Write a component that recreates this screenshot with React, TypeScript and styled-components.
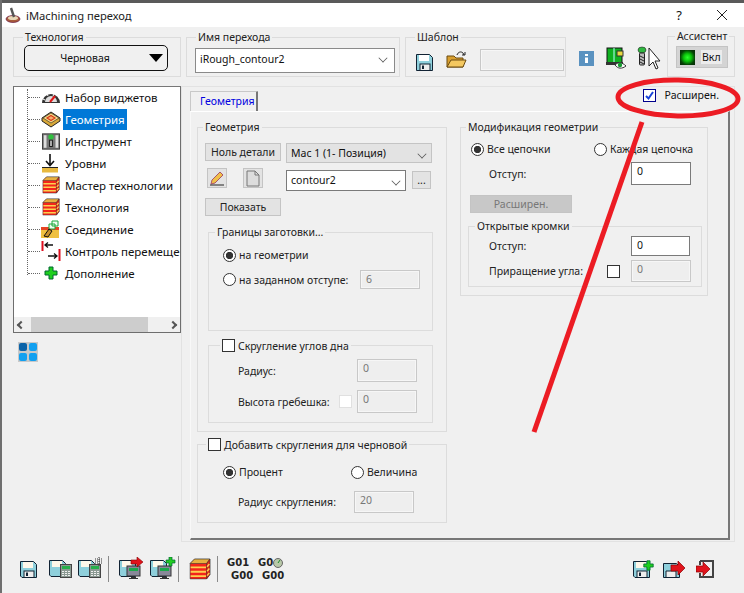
import React from 'react';
import styled, { createGlobalStyle } from 'styled-components';

const Global = createGlobalStyle`
  html, body { margin: 0; padding: 0; background: #f0f0f0; }
  body { width: 744px; height: 593px; overflow: hidden; font-family: "Noto Sans", "Liberation Sans", sans-serif; font-size: 10.5px; color: #111; }
  * { box-sizing: border-box; }
`;

const Win = styled.div`position: relative; width: 744px; height: 593px; overflow: hidden; background: #f0f0f0; border-left: 2px solid #6f6f6f;`;
const TopStrip = styled.div`height: 3px; background: #5a5a5a;`;
const TitleBar = styled.div`height: 24px; background: #fff; display: flex; align-items: center; padding-left: 3px; gap: 5px; font-size: 11.2px;`;
const TitleText = styled.span`flex: 1; color: #222;`;
const TitleBtn = styled.span`width: 40px; display: flex; justify-content: center; font-size: 13px; &:last-child{width: 45px; margin-left: -5px;}`;
const Top = styled.div`display: flex; padding: 4px 0 0 11px; height: 52px;`;
const Group = styled.fieldset<{ $w?: number; $h?: number; $ml?: number; $mt?: number }>`
  margin: ${p => p.$mt ?? 0}px 0 0 ${p => p.$ml ?? 0}px; padding: 0; border: 1px solid #dcdcdc; min-width: 0; flex: none;
  width: ${p => (p.$w ? p.$w + 'px' : 'auto')}; height: ${p => (p.$h ? p.$h + 'px' : 'auto')};
`;
const Legend = styled.legend<{ $ml?: number }>`margin-left: ${p => p.$ml ?? 9}px; padding: 0 2px; font-size: 10.5px; line-height: 12px; color: #222; display: flex; align-items: center; gap: 3px;`;
const TechBtn = styled.div`margin: 2px 0 0 10px; width: 144px; height: 26px; border: 1px solid #111; border-radius: 5px; display: flex; align-items: center; justify-content: center; position: relative; font-size: 10.5px; padding-right: 22px;
  &::after { content: ''; position: absolute; right: 4px; top: 8px; border: 7px solid transparent; border-top: 8px solid #000; border-bottom: 0; }`;
const NameField = styled.div`margin: 5px 0 0 8px; width: 200px; height: 25px; background: #fff; border: 1px solid #8a8a8a; display: flex; justify-content: space-between; padding: 3px 4px; font-size: 10.5px;`;
const Chevron = styled.span`width: 8px; height: 8px; border: solid #555; border-width: 0 1px 1px 0; transform: rotate(45deg) scale(.8); margin: 2px 3px 0 0;`;
const Row = styled.div<{ $gap?: number; $mt?: number; $ml?: number; $start?: boolean }>`display: flex; align-items: ${p => p.$start ? 'flex-start' : 'center'}; gap: ${p => p.$gap ?? 0}px; margin: ${p => p.$mt ?? 0}px 0 0 ${p => p.$ml ?? 0}px;`;
const ReadBox = styled.div<{ $w: number; $h?: number; $ml?: number }>`width: ${p => p.$w}px; height: ${p => p.$h ?? 23}px; margin-left: ${p => p.$ml ?? 0}px; border: 1px solid #c8c8c8; background: #eeeeee; color: #777; font-size: 10.5px; padding: 1px 5px; flex: none; box-shadow: inset 0 0 0 1px #f6f6f6;`;
const EditBox = styled.div<{ $w: number; $h: number; $ml?: number }>`width: ${p => p.$w}px; height: ${p => p.$h}px; margin-left: ${p => p.$ml ?? 0}px; flex: none; border: 1px solid #7a7a7a; background: #fff; font-size: 10.5px; padding: 1px 5px;`;
const LedBtn = styled.div`margin: 4px 0 0 8px; width: 52px; height: 22px; background: #d4d4d4; border: 1px solid #c4c4c4; display: flex; align-items: center; padding-left: 3px; gap: 6px; font-size: 10.5px;`;
const Led = styled.div`width: 15px; height: 15px; background: radial-gradient(circle, #2bff2b 0, #0bc40b 35%, #053f05 70%, #0a2a0a 100%);`;
const LedLabel = styled.span`background: #ececec; padding: 0 1px; line-height: 14px;`;

const Body = styled.div`display: flex; padding: 7px 0 0 11px;`;
const LeftCol = styled.div`width: 169px; flex: none;`;
const Tree = styled.div`height: 247px; width: 168px; border: 1px solid #6e6e6e; background: #fff; display: flex; flex-direction: column; border-top-color: #777; overflow: hidden;`;
const TreeList = styled.div`flex: 1; margin-top: -1px; padding: 0 0 0 14px; position: relative; overflow: hidden;`;
const TreeItem = styled.div`height: 22px; display: flex; align-items: center; white-space: nowrap; font-size: 11.5px; position: relative; padding-left: 13px; color: #111;
  &::before { content: ''; position: absolute; left: 0; width: 12px; top: 11px; border-top: 1px dotted #666; }`;
const VLine = styled.div`position: absolute; left: 13px; top: 3px; height: 186px; border-left: 1px dotted #666;`;
const TreeIcon = styled.span`width: 20px; height: 20px; flex: none; margin-right: 4px; display: inline-flex; align-items: center; justify-content: center;`;
const TreeLabel = styled.span<{ $sel?: boolean }>`padding: 0 2px 0 ${p => p.$sel ? 2 : 0}px; line-height: 21px; height: 21px; margin-left: ${p => p.$sel ? -2 : 0}px; background: ${p => p.$sel ? '#0078d7' : 'transparent'}; color: ${p => p.$sel ? '#fff' : '#111'};`;
const HScroll = styled.div`height: 15px; background: #f0f0f0; display: flex; align-items: center; justify-content: space-between; position: relative; padding: 0 4px; color: #555;`;
const Thumb = styled.div`position: absolute; left: 17px; width: 117px; top: 0; height: 15px; background: #cdcdcd;`;
const Arrow = styled.span<{ $r?: boolean }>`width: 6px; height: 6px; border: solid #555; border-width: 2px 0 0 2px; transform: rotate(${p => p.$r ? 135 : -45}deg);`;
const GridIcon = styled.div`margin: 9px 0 0 5px; width: 20px; height: 20px; display: grid; grid-template-columns: 1fr 1fr; gap: 2px; padding: 1px; background: #c9c9c9;`;
const GridCell = styled.div<{ $d?: boolean }>`background: ${p => p.$d ? '#0a63a8' : '#12a0f0'}; border-radius: 2px;`;

const Outer = styled.div`width: 554px; height: 456px; margin-left: -1px; border: 1px solid #e2e2e2; padding: 4px 4px 0 8px; flex: none;`;
const Tab = styled.div`width: 68px; height: 20px; background: #f0f0f0; border: 1px solid #c8c8c8; border-bottom: 0; border-right: 2px solid #777; color: #0000e0; font-size: 10.5px; padding: 2px 0 0 9px; border-radius: 1px 1px 0 0;`;
const Page = styled.div`position: relative; height: 429px; border: 1px solid #fff; border-left-color: #f8f8f8; border-right: 2px solid #777; border-bottom: 2px solid #777; padding: 9px 0 0 6px; display: flex;`;
const AdvCheck = styled.div`position: absolute; right: 9px; top: -24px; display: flex; align-items: center; gap: 9px; font-size: 10.5px;`;
const PageLeft = styled.div`width: 250px; flex: none;`;
const PageRight = styled.div`width: 248px; margin-left: 13px; flex: none;`;
const Check = styled.span<{ $on?: boolean; $light?: boolean }>`width: 13px; height: 13px; flex: none; display: inline-block; background: #fff; border: 1px solid ${p => p.$on ? '#00008c' : p.$light ? '#e0e0e0' : '#333'}; position: relative;`;
const Radio = styled.span<{ $on?: boolean }>`width: 13px; height: 13px; flex: none; border-radius: 50%; border: 1px solid #333; background: ${p => p.$on ? 'radial-gradient(circle, #333 0 3.4px, #fff 3.9px)' : '#fff'};`;
const FlatBtn = styled.div<{ $w: number; $h?: number; $off?: boolean; $ml?: number; $mt?: number }>`width: ${p => p.$w}px; height: ${p => p.$h ?? 18}px; margin: ${p => p.$mt ?? 0}px 0 0 ${p => p.$ml ?? 0}px; flex: none; background: ${p => p.$off ? '#c8c8c8' : '#e3e3e3'}; border: 1px solid #c4c4c4; color: ${p => p.$off ? '#777' : '#222'}; display: flex; align-items: center; justify-content: center; font-size: 10.5px;`;
const Combo = styled.div<{ $w: number; $h: number; $white?: boolean; $ml?: number; $mt?: number }>`width: ${p => p.$w}px; height: ${p => p.$h}px; margin: ${p => p.$mt ?? 0}px 0 0 ${p => p.$ml ?? 0}px; flex: none; background: ${p => p.$white ? '#fff' : '#e3e3e3'}; border: 1px solid ${p => p.$white ? '#7a7a7a' : '#c4c4c4'}; display: flex; align-items: center; justify-content: space-between; padding: 0 2px 1px 4px; font-size: 10.5px;`;
const Lbl = styled.span<{ $w?: number }>`${p => p.$w ? `width:${p.$w}px;flex:none;` : ''} white-space: nowrap; color: #222; font-size: 10.5px;`;

const Bottom = styled.div`margin-top: 12px; height: 30px; display: flex; align-items: center; padding-left: 18px;`;
const Sep = styled.div<{ $l: number; $r: number }>`width: 1px; height: 26px; background: #8a8a8a; margin: 0 ${p => p.$r}px 0 ${p => p.$l}px; flex: none;`;
const Gcode = styled.div<{ $w: number }>`width: ${p => p.$w}px; flex: none; font: bold 10px/13px "DejaVu Sans", sans-serif; color: #222;`;
const GLine = styled.div<{ $in?: boolean }>`padding-left: ${p => p.$in ? 4 : 0}px; display: flex; align-items: center; height: 13px; gap: 0;`;
const Spacer = styled.div`flex: 1;`;
const BIcon = styled.span<{ $mr?: number }>`display: inline-flex; margin-right: ${p => p.$mr ?? 0}px; flex: none;`;
const Overlay = styled.svg`position: absolute; left: -2px; top: 0; pointer-events: none;`;

const Floppy = ({ s = 17 }: { s?: number }) => (
  <svg width={s} height={s} viewBox="0 0 17 17"><path d="M.5.5h13l3 3v13H2L.5 15z" fill="#8fd0dc" stroke="#123" /><rect x="3" y="1" width="10" height="6" fill="#fff8ea" /><rect x="4" y="10" width="10" height="6.5" fill="#eee" stroke="#123" /><rect x="6" y="11.5" width="2" height="3.5" fill="#123" /></svg>
);
const Calc = () => (
  <svg x="11" y="7" width="12" height="14" viewBox="0 0 12 14"><rect x=".5" y=".5" width="11" height="13" fill="#8a9a92" stroke="#444" /><rect x="2" y="2" width="8" height="3" fill="#25b04a" /><path d="M2 7h2v1H2zm3 0h2v1H5zm3 0h2v1H8zM2 9h2v1H2zm3 0h2v1H5zm3 0h2v1H8zM2 11h2v1H2zm3 0h2v1H5zm3 0h2v1H8z" fill="#eee" /></svg>
);
const FloppyCalc = ({ dots }: { dots?: boolean }) => (
  <svg width="26" height="24" viewBox="0 0 26 24"><g transform="translate(0,3)"><path d="M.5.5h13l3 3v13H2L.5 15z" fill="#8fd0dc" stroke="#123" /><rect x="3" y="1" width="10" height="6" fill="#fff8ea" /></g><Calc />{dots && <path d="M17 2h7M17 4h7M17 6h7M21 0v10" stroke="#333" strokeDasharray="1 1" />}</svg>
);
const FloppyMon = ({ red }: { red?: boolean }) => (
  <svg width="26" height="24" viewBox="0 0 26 24"><g transform="translate(0,3)"><path d="M.5.5h13l3 3v13H2L.5 15z" fill="#8fd0dc" stroke="#123" /><rect x="3" y="1" width="10" height="6" fill="#fff8ea" /></g><rect x="8" y="9" width="13" height="10" fill="#889" stroke="#333" /><rect x="10" y="11" width="9" height="3" fill="#1aa84a" /><path d="M12 20h5v1h2v1h-9v-1h2z" fill="#333" />
    {red ? <path d="M12 3h6V0l6 5-6 5V7h-6z" fill="#e0141c" stroke="#800" strokeWidth=".6" /> : <path d="M16 3h3V0h3v3h3v3h-3v3h-3V6h-3z" fill="#22cc22" stroke="#063" strokeWidth=".7" />}</svg>
);
const Stack = ({ s = 20 }: { s?: number }) => (
  <svg width={s} height={s} viewBox="0 0 20 20"><path d="M1 5l4-4h14v14l-3 4H1z" fill="#f4241a" stroke="#333" strokeWidth=".5" /><path d="M1 5l4-4h14l-3 4z" fill="#e8b040" stroke="#333" strokeWidth=".5" /><path d="M1.500 8.500h14M1.500 12.500h14M1.500 16.500h14" stroke="#fbd050" strokeWidth="1.700" /><path d="M16 5l3-4v14l-3 4z" fill="#e0281a" stroke="#333" strokeWidth=".5" /><path d="M16.500 8l2-2.500M16.500 12l2-2.500M16.500 16l2-2.500" stroke="#fbd050" strokeWidth="1.300" /></svg>
);
const PlusG = ({ s = 14 }: { s?: number }) => (
  <svg width={s} height={s} viewBox="0 0 14 14"><path d="M5 1h4v4h4v4H9v4H5V9H1V5h4z" fill="#1fcf1f" stroke="#063" /></svg>
);
const Gauge = () => (
  <svg width="20" height="13" viewBox="0 0 20 13"><path d="M1 12a9 9 0 0 1 18 0z" fill="#333" /><path d="M4 11a6 6 0 0 1 12 0z" fill="#ddd" /><path d="M9 11l5-6" stroke="#e01818" strokeWidth="2" /><path d="M2 8l2 1M6 3l1 2M13 3l-1 2" stroke="#fff" /></svg>
);
const Geo = () => (
  <svg width="20" height="17" viewBox="0 0 20 17"><path d="M10 1l9 6v3l-9 6-9-6V7z" fill="#d8a838" stroke="#222" /><path d="M10 2l8 5-8 5-8-5z" fill="#f8dc88" stroke="#222" strokeWidth=".6" /><path d="M10 4.500l4 2.500-4 2.500-4-2.500z" fill="#f4b070" stroke="#d83a18" strokeWidth="1.200" /></svg>
);
const ToolIc = () => (
  <svg width="18" height="19" viewBox="0 0 20 20"><rect x=".5" y="1.500" width="19" height="17" fill="#777" stroke="#333" /><rect x="2" y="3" width="3" height="14" fill="#ddd" /><rect x="15" y="3" width="3" height="14" fill="#ddd" /><circle cx="10" cy="5" r="3" fill="#2fbf3f" /><rect x="8" y="8" width="4" height="8" fill="#111" /><rect x="9" y="9" width="2" height="6" fill="#bbb" /></svg>
);
const Levels = () => (
  <svg width="18" height="20" viewBox="0 0 18 20"><rect y="15" width="16" height="4.500" fill="#e8b93f" /><path d="M0 14.500h16" stroke="#222" /><path d="M8 1v11M4 8l4 4.500L12 8" fill="none" stroke="#111" strokeWidth="1.600" /></svg>
);
const Conn = () => (
  <svg width="20" height="20" viewBox="0 0 20 20"><rect y="8" width="18" height="11" fill="#efc040" /><path d="M0 8h18v3H0z" fill="#e64424" /><path d="M8 5h6v5H8zM11 2h6v5h-6z" fill="#f0fff0" stroke="#1ba83a" /><path d="M3 17l5-7 3 2-4 6z" fill="#c8902c" stroke="#111" /></svg>
);
const Move = () => (
  <svg width="20" height="20" viewBox="0 0 20 20"><path d="M1.500 0v10M18.500 8v12" stroke="#e01020" strokeWidth="2" /><path d="M12 4H4M7 1.500L4 4l3 2.500M7 15h9M13 12.500l3 2.500-3 2.500" fill="none" stroke="#111" strokeWidth="1.300" /></svg>
);

const items: [React.ReactNode, string, boolean?][] = [
  [<Gauge />, 'Набор виджетов'], [<Geo />, 'Геометрия', true], [<ToolIc />, 'Инструмент'], [<Levels />, 'Уровни'],
  [<Stack s={18} />, 'Мастер технологии'], [<Stack s={18} />, 'Технология'], [<Conn />, 'Соединение'], [<Move />, 'Контроль перемещения'], [<PlusG />, 'Дополнение'],
];

export default function App() {
  return (
    <Win>
      <Global />
      <TopStrip />
      <TitleBar>
        <svg width="16" height="16" viewBox="0 0 16 16"><ellipse cx="8" cy="12" rx="7" ry="3.500" fill="#a85a3c" stroke="#503" strokeWidth=".6" /><ellipse cx="8" cy="11" rx="5" ry="2" fill="#e8d8b8" /><path d="M6 1l3 9" stroke="#555" strokeWidth="2.400" /></svg>
        <TitleText>iMachining переход</TitleText>
        <TitleBtn>?</TitleBtn>
        <TitleBtn>
          <svg width="12" height="12" viewBox="0 0 12 12"><path d="M1 1l10 10M11 1L1 11" stroke="#222" /></svg>
        </TitleBtn>
      </TitleBar>
      <Top>
        <Group $w={168} $h={46}><Legend $ml={9}>Технология</Legend><TechBtn>Черновая</TechBtn></Group>
        <Group $w={214} $h={46} $ml={5}><Legend>Имя перехода</Legend><NameField>iRough_contour2<Chevron /></NameField></Group>
        <Group $w={161} $h={46} $ml={5}>
          <Legend>Шаблон</Legend>
          <Row $mt={5} $ml={10}>
            <svg width="17" height="23" viewBox="0 -6 17 23"><path d="M.5.5h13l3 3v13H.5z" fill="#8fd0dc" stroke="#123" /><rect x="3" y="1" width="10" height="6" fill="#fff" /><rect x="4" y="10" width="10" height="6.500" fill="#eee" stroke="#123" /><rect x="6" y="11.500" width="2" height="3.500" fill="#123" /></svg>
            <svg style={{ marginLeft: 13 }} width="21" height="19" viewBox="0 0 21 19"><path d="M1 6h7l2 2h7v9H1z" fill="#d9a030" stroke="#6a4a10" /><path d="M1 17l4-7h15l-3 7z" fill="#f4c860" stroke="#6a4a10" /><path d="M11 5c1-3 4-4 6-2l1 2M19 2v3h-3" fill="none" stroke="#222" /></svg>
            <ReadBox $w={84} $h={22} $ml={13} />
          </Row>
        </Group>
        <Row $ml={13} $mt={6}>
          <svg width="15" height="15" viewBox="0 0 15 15"><rect width="15" height="15" fill="#5a92c0" /><rect x="6" y="3" width="3" height="2" fill="#fff" /><rect x="6" y="6.500" width="3" height="5.500" fill="#fff" /></svg>
          <svg style={{ marginLeft: 12 }} width="22" height="22" viewBox="0 0 22 22"><rect x="1" y="1" width="15" height="15" fill="#0fb020" stroke="#111" /><path d="M8 1v15" stroke="#bff" /><rect x="11" y="4" width="6" height="5" fill="#e8d840" stroke="#333" /><rect x="0" y="15" width="17" height="3" fill="#333" /><path d="M9 18c3-3 7-3 11 1-4 3-8 3-11-1z" fill="#fff" stroke="#333" /><circle cx="14" cy="18" r="2.200" fill="#159a30" /></svg>
          <svg style={{ marginLeft: 9 }} width="24" height="24" viewBox="0 0 24 24"><ellipse cx="5" cy="4" rx="4" ry="3" fill="#2fb83f" stroke="#222" strokeWidth=".6" /><rect x="2.500" y="7" width="5" height="12" rx="1" fill="#bbb" stroke="#222" /><path d="M3 10l4 2M3 13l4 2M3 16l4 2" stroke="#222" /><path d="M12 2v18l4-4 3 7 2-1-3-7h5z" fill="#fff" stroke="#222" /></svg>
        </Row>
        <Group $w={68} $h={47} $ml={6} $mt={-1}>
          <Legend $ml={7}>Ассистент</Legend>
          <LedBtn><Led /><LedLabel>Вкл</LedLabel></LedBtn>
        </Group>
      </Top>
      <Body>
        <LeftCol>
          <Tree>
            <TreeList>
              <VLine />
              {items.map(([ic, t, sel]) => (
                <TreeItem key={t}><TreeIcon>{ic}</TreeIcon><TreeLabel $sel={sel}>{t}</TreeLabel></TreeItem>
              ))}
            </TreeList>
            <HScroll><Arrow /><Thumb /><Arrow $r /></HScroll>
          </Tree>
          <GridIcon><GridCell $d /><GridCell /><GridCell /><GridCell /></GridIcon>
        </LeftCol>
        <Outer>
          <Tab>Геометрия</Tab>
          <Page>
            <AdvCheck>
              <Check $on><svg width="11" height="11" viewBox="0 0 11 11"><path d="M2 6l2.500 2.500L9 2" fill="none" stroke="#1a44d8" strokeWidth="2" /></svg></Check>
              Расширен.
            </AdvCheck>
            <PageLeft>
              <Group $h={311}>
                <Legend $ml={5}>Геометрия</Legend>
                <Row $mt={10} $ml={7} $start>
                  <FlatBtn $w={76}>Ноль детали</FlatBtn>
                  <Combo $w={146} $h={20} $ml={5}>Mac 1 (1- Позиция)<Chevron /></Combo>
                </Row>
                <Row $mt={5} $ml={9} $start>
                  <FlatBtn $w={20} $h={20}>
                    <svg width="16" height="16" viewBox="0 0 16 16"><path d="M3 10l8-8 3 3-8 8-4 1z" fill="#f0c048" stroke="#a56" /><path d="M1 15h14" stroke="#222" /></svg>
                  </FlatBtn>
                  <FlatBtn $w={20} $h={20} $ml={16}>
                    <svg width="14" height="17" viewBox="0 0 14 17"><path d="M1 1h8l4 4v11H1z" fill="#ddd" stroke="#777" /><path d="M9 1v4h4" fill="none" stroke="#777" /></svg>
                  </FlatBtn>
                  <Combo $w={120} $h={21} $white $ml={23} $mt={2}>contour2<Chevron /></Combo>
                  <FlatBtn $w={19} $h={18} $ml={6} $mt={3}>...</FlatBtn>
                </Row>
                <Row $mt={7} $ml={7}><FlatBtn $w={76}>Показать</FlatBtn></Row>
                <Group $w={225} $h={105} $ml={10} $mt={10}>
                  <Legend $ml={6}>Границы заготовки...</Legend>
                  <Row $mt={10} $ml={14} $gap={3}><Radio $on /><Lbl>на геометрии</Lbl></Row>
                  <Row $mt={8} $ml={14} $gap={3}><Radio /><Lbl $w={118}>на заданном отступе:</Lbl><ReadBox $w={60} $h={19}>6</ReadBox></Row>
                </Group>
                <Group $w={225} $h={84} $ml={10} $mt={8}>
                  <Legend $ml={11}><Check />Скругление углов дна</Legend>
                  <Row $mt={7} $ml={29}><Lbl $w={119}>Радиус:</Lbl><ReadBox $w={60}>0</ReadBox></Row>
                  <Row $mt={8} $ml={29}><Lbl $w={101}>Высота гребешка:</Lbl><Check $light /><ReadBox $w={60} $ml={5}>0</ReadBox></Row>
                </Group>
              </Group>
              <Group $h={85} $mt={6}>
                <Legend $ml={8}><Check />Добавить скругления для черновой</Legend>
                <Row $mt={14} $ml={25} $gap={3}><Radio $on /><Lbl $w={109}>Процент</Lbl><Radio /><Lbl>Величина</Lbl></Row>
                <Row $mt={12} $ml={40}><Lbl $w={116}>Радиус скругления:</Lbl><ReadBox $w={60} $h={22}>20</ReadBox></Row>
              </Group>
            </PageLeft>
            <PageRight>
              <Group $h={175}>
                <Legend $ml={5}>Модификация геометрии</Legend>
                <Row $mt={9} $ml={10} $gap={3}><Radio $on /><Lbl $w={104}>Все цепочки</Lbl><Radio /><Lbl>Каждая цепочка</Lbl></Row>
                <Row $mt={6} $ml={28}><Lbl $w={142}>Отступ:</Lbl><EditBox $w={60} $h={23}>0</EditBox></Row>
                <Row $mt={10} $ml={9}><FlatBtn $w={102} $off>Расширен.</FlatBtn></Row>
                <Group $w={234} $h={67} $ml={7} $mt={7}>
                  <Legend $ml={6}>Открытые кромки</Legend>
                  <Row $mt={4} $ml={20}><Lbl $w={142}>Отступ:</Lbl><EditBox $w={59} $h={20}>0</EditBox></Row>
                  <Row $mt={4} $ml={20}><Lbl $w={118}>Приращение угла:</Lbl><Check /><ReadBox $w={60} $h={22} $ml={11}>0</ReadBox></Row>
                </Group>
              </Group>
            </PageRight>
          </Page>
        </Outer>
      </Body>
      <Bottom>
        <BIcon $mr={12}><Floppy /></BIcon>
        <BIcon $mr={3}><FloppyCalc /></BIcon>
        <BIcon><FloppyCalc dots /></BIcon>
        <Sep $l={4} $r={10} />
        <BIcon $mr={5}><FloppyMon red /></BIcon>
        <BIcon><FloppyMon /></BIcon>
        <Sep $l={2} $r={10} />
        <Stack s={22} />
        <Sep $l={6} $r={9} />
        <Gcode $w={31}><GLine>G01</GLine><GLine $in>G00</GLine></Gcode>
        <Gcode $w={30}>
          <GLine>G0<svg width="10" height="10" viewBox="0 0 10 10"><circle cx="5" cy="5" r="4.500" fill="#b8c8a8" stroke="#666" /><path d="M5 5l2-3" stroke="#1a8a2a" /></svg></GLine>
          <GLine $in>G00</GLine>
        </Gcode>
        <Spacer />
        <BIcon $mr={8}><svg width="22" height="18" viewBox="0 0 22 18"><g transform="translate(0,1)"><Floppy /></g><g transform="translate(10,0)"><PlusG s={11} /></g></svg></BIcon>
        <BIcon $mr={10}><svg width="23" height="18" viewBox="0 0 23 18"><path d="M.5 3.500h13l3 3v11H.5z" fill="#8fd0dc" stroke="#123" /><path d="M3 11h10v6.500H3z" fill="#eee" stroke="#123" /><path d="M8 5h7V1l7 7-7 7v-4H8z" fill="#e0141c" stroke="#800" strokeWidth=".7" /></svg></BIcon>
        <BIcon $mr={30}><svg width="18" height="18" viewBox="0 0 18 18"><path d="M4 1h13v16H4v-4M4 5V1" fill="none" stroke="#444" strokeWidth="2" /><path d="M0 6h7V2l7 7-7 7v-4H0z" fill="#e0141c" stroke="#800" strokeWidth=".7" /></svg></BIcon>
      </Bottom>
      <Overlay width="744" height="593" viewBox="0 0 744 593">
        <ellipse cx="678" cy="98" rx="60" ry="18" fill="none" stroke="#ec1c24" strokeWidth="5" transform="rotate(1 678 98)" />
        <path d="M642 122L534 432" stroke="#ec1c24" strokeWidth="5" fill="none" />
      </Overlay>
    </Win>
  );
}
